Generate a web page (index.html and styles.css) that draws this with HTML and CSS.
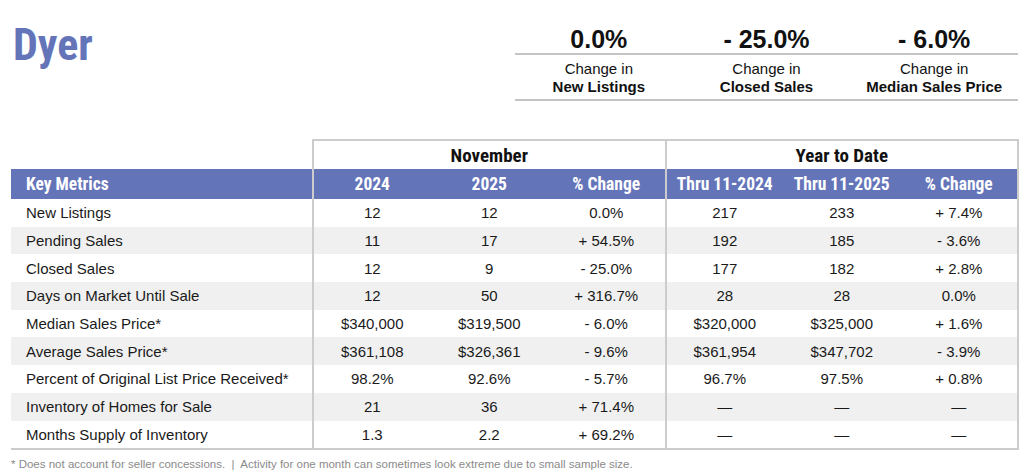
FILE: index.html
```html
<!DOCTYPE html>
<html lang="en">
<head>
<meta charset="utf-8">
<title>Dyer</title>
<link rel="stylesheet" href="styles.css">
</head>
<body>
<div class="page">
  <header class="top">
    <h1 class="title">Dyer</h1>
    <div class="stats">
      <div class="stat">
        <div class="stat-num">0.0%</div>
        <div class="stat-label">Change in<br><b>New Listings</b></div>
      </div>
      <div class="stat">
        <div class="stat-num">- 25.0%</div>
        <div class="stat-label">Change in<br><b>Closed Sales</b></div>
      </div>
      <div class="stat">
        <div class="stat-num">- 6.0%</div>
        <div class="stat-label">Change in<br><b>Median Sales Price</b></div>
      </div>
    </div>
  </header>

  <table class="metrics">
    <colgroup>
      <col class="c-label">
      <col class="c-num"><col class="c-num"><col class="c-num">
      <col class="c-num"><col class="c-num"><col class="c-num">
    </colgroup>
    <thead>
      <tr class="group-row">
        <th class="blank"></th>
        <th colspan="3" class="group bl">November</th>
        <th colspan="3" class="group bl br">Year to Date</th>
      </tr>
      <tr class="head-row">
        <th class="label">Key Metrics</th>
        <th class="bl">2024</th>
        <th>2025</th>
        <th>% Change</th>
        <th class="bl">Thru 11-2024</th>
        <th>Thru 11-2025</th>
        <th class="br">% Change</th>
      </tr>
    </thead>
    <tbody>
      <tr><td class="label">New Listings</td><td class="bl">12</td><td>12</td><td>0.0%</td><td class="bl">217</td><td>233</td><td class="br">+ 7.4%</td></tr>
      <tr><td class="label">Pending Sales</td><td class="bl">11</td><td>17</td><td>+ 54.5%</td><td class="bl">192</td><td>185</td><td class="br">- 3.6%</td></tr>
      <tr><td class="label">Closed Sales</td><td class="bl">12</td><td>9</td><td>- 25.0%</td><td class="bl">177</td><td>182</td><td class="br">+ 2.8%</td></tr>
      <tr><td class="label">Days on Market Until Sale</td><td class="bl">12</td><td>50</td><td>+ 316.7%</td><td class="bl">28</td><td>28</td><td class="br">0.0%</td></tr>
      <tr><td class="label">Median Sales Price*</td><td class="bl">$340,000</td><td>$319,500</td><td>- 6.0%</td><td class="bl">$320,000</td><td>$325,000</td><td class="br">+ 1.6%</td></tr>
      <tr><td class="label">Average Sales Price*</td><td class="bl">$361,108</td><td>$326,361</td><td>- 9.6%</td><td class="bl">$361,954</td><td>$347,702</td><td class="br">- 3.9%</td></tr>
      <tr><td class="label">Percent of Original List Price Received*</td><td class="bl">98.2%</td><td>92.6%</td><td>- 5.7%</td><td class="bl">96.7%</td><td>97.5%</td><td class="br">+ 0.8%</td></tr>
      <tr><td class="label">Inventory of Homes for Sale</td><td class="bl">21</td><td>36</td><td>+ 71.4%</td><td class="bl">—</td><td>—</td><td class="br">—</td></tr>
      <tr><td class="label">Months Supply of Inventory</td><td class="bl">1.3</td><td>2.2</td><td>+ 69.2%</td><td class="bl">—</td><td>—</td><td class="br">—</td></tr>
    </tbody>
  </table>

  <p class="footnote">* Does not account for seller concessions. &nbsp;|&nbsp; Activity for one month can sometimes look extreme due to small sample size.</p>
</div>
</body>
</html>
```

FILE: styles.css
```css
html, body {
  margin: 0;
  padding: 0;
  background: #ffffff;
}

body {
  font-family: "Liberation Sans", Arial, sans-serif;
  color: #1a1a1a;
}

.page {
  width: 1007px;
  padding: 0 6px 0 11px;
}

.top {
  display: flex;
  justify-content: space-between;
  align-items: flex-start;
}

.title {
  margin: 21px 0 0 2px;
  font-family: "Roboto Condensed", "Liberation Sans Narrow", "DejaVu Sans Condensed", sans-serif;
  font-stretch: condensed;
  font-weight: 700;
  font-size: 44px;
  line-height: 48px;
  color: #6474b9;
}

.stats {
  display: flex;
  width: 503px;
  margin-top: 25px;
}

.stat {
  flex: 1 1 0;
  text-align: center;
}

.stat-num {
  height: 28px;
  line-height: 28px;
  font-size: 25px;
  font-weight: 700;
  color: #111111;
  border-bottom: 2px solid #c4c4c4;
}

.stat-label {
  padding: 5px 0 3px;
  font-size: 15px;
  line-height: 18px;
  color: #111111;
  border-bottom: 2px solid #c4c4c4;
}

.stat-label b {
  font-weight: 700;
}

.metrics {
  margin-top: 38px;
  width: 1007px;
  border-collapse: collapse;
  table-layout: fixed;
}

.c-label { width: 302px; }
.c-num { width: 117.5px; }

.metrics th,
.metrics td {
  padding: 0;
  text-align: center;
  white-space: nowrap;
}

.group-row th {
  height: 28px;
  font-family: "Roboto Condensed", "Liberation Sans Narrow", "DejaVu Sans Condensed", sans-serif;
  font-stretch: condensed;
  font-weight: 700;
  font-size: 19px;
  color: #111111;
}

.group-row .group {
  border-top: 2px solid #cccccc;
}

.head-row th {
  height: 30px;
  background: #6474b9;
  color: #ffffff;
  font-family: "Roboto Condensed", "Liberation Sans Narrow", "DejaVu Sans Condensed", sans-serif;
  font-stretch: condensed;
  font-weight: 700;
  font-size: 17.5px;
}

.metrics .label {
  text-align: left;
  padding-left: 15px;
}

.metrics td {
  height: 27.7px;
  font-size: 15px;
  color: #1a1a1a;
}

.metrics tbody tr:nth-child(even) td {
  background: #f0f0f0;
}

.metrics tbody tr:last-child td {
  border-bottom: 2px solid #cccccc;
}

.metrics .bl { border-left: 2px solid #cccccc; }
.metrics .br { border-right: 2px solid #cccccc; }

.footnote {
  margin: 7px 0 0 0;
  font-size: 11.5px;
  line-height: 14px;
  color: #8a8a8a;
}
```
